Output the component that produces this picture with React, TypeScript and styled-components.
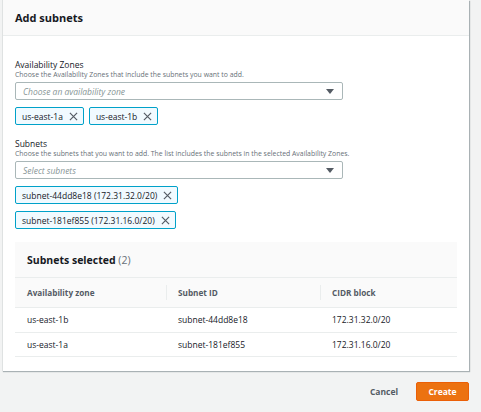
import React from 'react'
import styled, { createGlobalStyle } from 'styled-components'

const GlobalStyle = createGlobalStyle`
  html, body {
    margin: 0;
    padding: 0;
    background: #f2f3f3;
    font-family: 'Open Sans', 'Liberation Sans', sans-serif;
    color: #16191f;
  }
`

const Page = styled.div`
  width: 481px;
  height: 412px;
  padding: 0 12px 0 2px;
  box-sizing: border-box;
`

const Card = styled.div`
  background: #ffffff;
  border-left: 1px solid #dfe2e2;
  box-shadow: 1px 1px 1px 0 rgba(0, 28, 36, 0.3);
  height: 371px;
  box-sizing: border-box;
`

const CardHeader = styled.div`
  height: 36px;
  background: #fafafa;
  border-bottom: 1px solid #eaeded;
  box-sizing: border-box;
  display: flex;
  align-items: center;
  padding: 0 12px;
  font-size: 11px;
  font-weight: 700;
`

const CardBody = styled.div`
  padding: 23px 12px 0;
  display: flex;
  flex-direction: column;
`

const Field = styled.div<{ $gap?: number }>`
  display: flex;
  flex-direction: column;
  margin-bottom: ${(p) => p.$gap ?? 0}px;
`

const Label = styled.div`
  font-size: 8.5px;
  line-height: 11px;
  color: #16191f;
`

const Description = styled.div`
  font-size: 6.9px;
  line-height: 10px;
  color: #687078;
  white-space: nowrap;
  margin-bottom: 2px;
`

const SelectBox = styled.div`
  width: 328px;
  height: 18px;
  box-sizing: border-box;
  border: 1px solid #aab7b8;
  border-radius: 2px;
  display: flex;
  align-items: center;
  justify-content: space-between;
  padding: 0 8px 0 7px;
  font-size: 8.5px;
  font-style: italic;
  color: #879596;
  margin-bottom: 7px;
`

const Caret = styled.span`
  width: 0;
  height: 0;
  border-left: 4px solid transparent;
  border-right: 4px solid transparent;
  border-top: 5px solid #545b64;
`

const TokenRow = styled.div`
  display: flex;
  gap: 5px;
  margin-bottom: 7px;
`

const Token = styled.div<{ $gap?: number }>`
  height: 18px;
  box-sizing: border-box;
  border: 1px solid #00a1c9;
  border-radius: 2px;
  background: #f1faff;
  display: flex;
  align-items: center;
  gap: 6px;
  padding: 0 5px 0 6px;
  font-size: 8.5px;
  color: #16191f;
  align-self: flex-start;
  margin-bottom: ${(p) => p.$gap ?? 0}px;
`

const Close = () => (
  <svg width="9" height="9" viewBox="0 0 10 10">
    <path d="M1 1 L9 9 M9 1 L1 9" stroke="#545b64" strokeWidth="1.3" fill="none" />
  </svg>
)

const TablePanel = styled.div`
  margin-top: 13px;
  width: 442px;
`

const TableTitle = styled.div`
  height: 36px;
  background: #fafafa;
  border-bottom: 1px solid #eaeded;
  box-sizing: border-box;
  display: flex;
  align-items: center;
  padding: 0 12px;
  font-size: 10.5px;
  font-weight: 700;
  span {
    font-weight: 400;
    color: #687078;
  }
`

const Grid = styled.div<{ $head?: boolean }>`
  display: grid;
  grid-template-columns: 151px 154px 1fr;
  height: ${(p) => (p.$head ? 30 : 24.5)}px;
  background: ${(p) => (p.$head ? '#fafafa' : '#ffffff')};
  border-bottom: 1px solid #eaeded;
  box-sizing: border-box;
  font-size: ${(p) => (p.$head ? 8.2 : 8.5)}px;
  font-weight: ${(p) => (p.$head ? 700 : 400)};
  color: ${(p) => (p.$head ? '#545b64' : '#16191f')};
`

const Col = styled.div<{ $divider?: boolean }>`
  display: flex;
  align-items: center;
  padding-left: 12px;
  position: relative;
  &::before {
    content: '';
    display: ${(p) => (p.$divider ? 'block' : 'none')};
    position: absolute;
    left: 0;
    top: 7px;
    bottom: 7px;
    border-left: 1px solid #eaeded;
  }
`

const Footer = styled.div`
  display: flex;
  justify-content: flex-end;
  align-items: center;
  gap: 18px;
  margin-top: 11px;
`

const LinkButton = styled.button`
  background: none;
  border: none;
  font-family: inherit;
  font-size: 8.5px;
  font-weight: 700;
  color: #545b64;
  padding: 0;
`

const PrimaryButton = styled.button`
  width: 53px;
  height: 19px;
  background: #ec7211;
  border: 1px solid #eb5f07;
  border-radius: 2px;
  font-family: inherit;
  font-size: 8.5px;
  font-weight: 700;
  color: #ffffff;
  padding: 0;
`

const rows = [
  { az: 'us-east-1b', id: 'subnet-44dd8e18', cidr: '172.31.32.0/20' },
  { az: 'us-east-1a', id: 'subnet-181ef855', cidr: '172.31.16.0/20' },
]

export default function App() {
  return (
    <>
      <GlobalStyle />
      <Page>
        <Card>
          <CardHeader>Add subnets</CardHeader>
          <CardBody>
            <Field $gap={6}>
              <Label>Availability Zones</Label>
              <Description>Choose the Availability Zones that include the subnets you want to add.</Description>
              <SelectBox>
                Choose an availability zone
                <Caret />
              </SelectBox>
              <TokenRow>
                <Token>us-east-1a <Close /></Token>
                <Token>us-east-1b <Close /></Token>
              </TokenRow>
            </Field>
            <Field>
              <Label>Subnets</Label>
              <Description>
                Choose the subnets that you want to add. The list includes the subnets in the selected Availability Zones.
              </Description>
              <SelectBox>
                Select subnets
                <Caret />
              </SelectBox>
              <Token $gap={7}>subnet-44dd8e18 (172.31.32.0/20) <Close /></Token>
              <Token>subnet-181ef855 (172.31.16.0/20) <Close /></Token>
            </Field>
            <TablePanel>
              <TableTitle>
                Subnets selected&nbsp;<span>(2)</span>
              </TableTitle>
              <Grid $head>
                <Col>Availability zone</Col>
                <Col $divider>Subnet ID</Col>
                <Col $divider>CIDR block</Col>
              </Grid>
              {rows.map((r) => (
                <Grid key={r.id}>
                  <Col>{r.az}</Col>
                  <Col>{r.id}</Col>
                  <Col>{r.cidr}</Col>
                </Grid>
              ))}
            </TablePanel>
          </CardBody>
        </Card>
        <Footer>
          <LinkButton>Cancel</LinkButton>
          <PrimaryButton>Create</PrimaryButton>
        </Footer>
      </Page>
    </>
  )
}
